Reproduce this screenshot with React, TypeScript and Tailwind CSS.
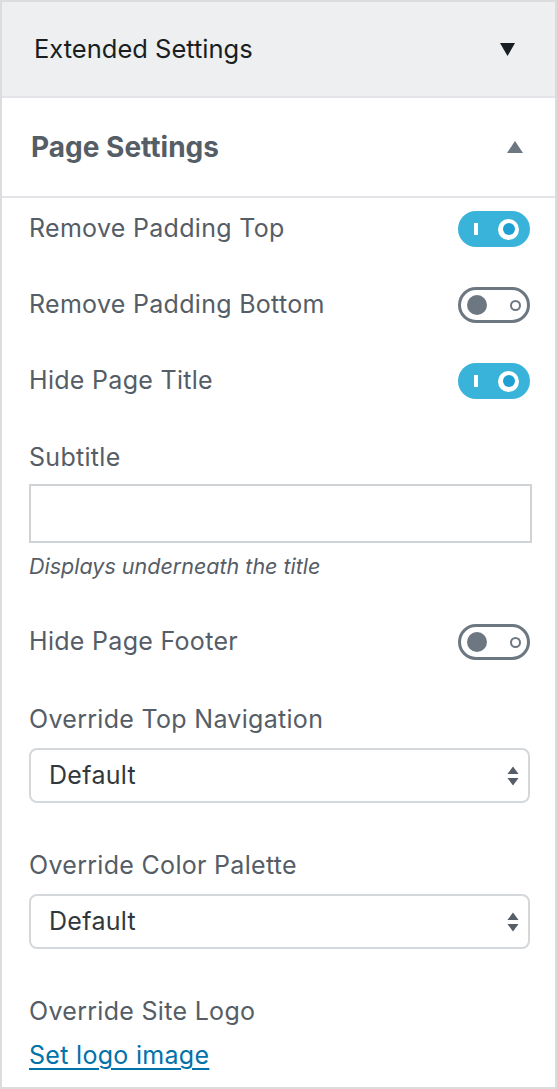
import React from 'react';

const font = { fontFamily: 'Inter, "Noto Sans", sans-serif' };

function Toggle({ on }: { on: boolean }) {
  if (on) {
    return (
      <div className="relative flex h-[36px] w-[72px] items-center rounded-full bg-[#3ab3da]">
        <span className="ml-[16px] h-[12px] w-[4px] bg-white" />
        <span className="ml-[20px] flex h-[21px] w-[21px] items-center justify-center rounded-full bg-white">
          <span className="h-[12px] w-[12px] rounded-full bg-[#1fa0d2]" />
        </span>
      </div>
    );
  }
  return (
    <div className="flex h-[36px] w-[72px] items-center rounded-full border-[3px] border-[#6c7781] bg-white">
      <span className="ml-[6px] h-[20px] w-[20px] rounded-full bg-[#6c7781]" />
      <span className="ml-[23px] h-[11px] w-[11px] rounded-full border-[2px] border-[#6c7781]" />
    </div>
  );
}

function ToggleRow({ label, on }: { label: string; on: boolean }) {
  return (
    <div className="flex h-[76px] items-center justify-between">
      <span className="text-[25px] tracking-[0.3px] text-[#555d66]">{label}</span>
      <Toggle on={on} />
    </div>
  );
}

function SelectBox() {
  return (
    <div className="flex h-[55px] items-center justify-between rounded-[8px] border-2 border-[#d5d8db] pl-[18px] pr-[9px]">
      <span className="text-[25px] tracking-[0.3px] text-[#32373c]">Default</span>
      <svg width="12" height="20" viewBox="0 0 12 20">
        <path d="M6 0.5 L11.5 8 H0.5 Z" fill="#555d66" />
        <path d="M6 19.5 L11.5 12 H0.5 Z" fill="#555d66" />
      </svg>
    </div>
  );
}

function Label({ children }: { children: React.ReactNode }) {
  return <div className="text-[25px] leading-[40px] tracking-[0.3px] text-[#555d66]">{children}</div>;
}

export default function App() {
  return (
    <div style={font} className="h-[1089px] w-[557px] overflow-hidden border-2 border-[#dcdcde] bg-white">
      <div className="flex h-[96px] items-center justify-between border-b-2 border-[#e2e4e7] bg-[#edeff0] pl-[32px] pr-[40px]">
        <span className="text-[25.5px] text-[#191e23]">Extended Settings</span>
        <svg width="15" height="13" viewBox="0 0 15 13">
          <path d="M0 0 H15 L7.5 13 Z" fill="#191e23" />
        </svg>
      </div>
      <div className="flex h-[100px] items-center justify-between border-b-2 border-[#e2e4e7] pl-[29px] pr-[32px]">
        <span className="text-[28px] font-bold text-[#555d66]">Page Settings</span>
        <svg width="16" height="12" viewBox="0 0 16 12">
          <path d="M8 0 L16 12 H0 Z" fill="#6c7781" />
        </svg>
      </div>
      <div className="-mt-[7px] pl-[27px] pr-[25px]">
        <ToggleRow label="Remove Padding Top" on />
        <ToggleRow label="Remove Padding Bottom" on={false} />
        <ToggleRow label="Hide Page Title" on />
        <div className="mt-[18px]">
          <Label>Subtitle</Label>
          <div className="mt-[7px] mr-[-2px] h-[59px] border-2 border-[#cfd3d6]" />
          <div className="mt-[9px] text-[21.5px] leading-[28px] italic text-[#555d66]">Displays underneath the title</div>
        </div>
        <div className="mt-[24px]">
          <ToggleRow label="Hide Page Footer" on={false} />
        </div>
        <div className="mt-[19px]">
          <Label>Override Top Navigation</Label>
        </div>
        <div className="mt-[9px]">
          <SelectBox />
        </div>
        <div className="mt-[42px]">
          <Label>Override Color Palette</Label>
        </div>
        <div className="mt-[9px]">
          <SelectBox />
        </div>
        <div className="mt-[42px]">
          <Label>Override Site Logo</Label>
        </div>
        <div className="mt-[4px]">
          <a href="#" className="text-[25px] leading-[40px] tracking-[0.3px] text-[#0073aa] underline decoration-2 underline-offset-[4px]">
            Set logo image
          </a>
        </div>
      </div>
    </div>
  );
}
